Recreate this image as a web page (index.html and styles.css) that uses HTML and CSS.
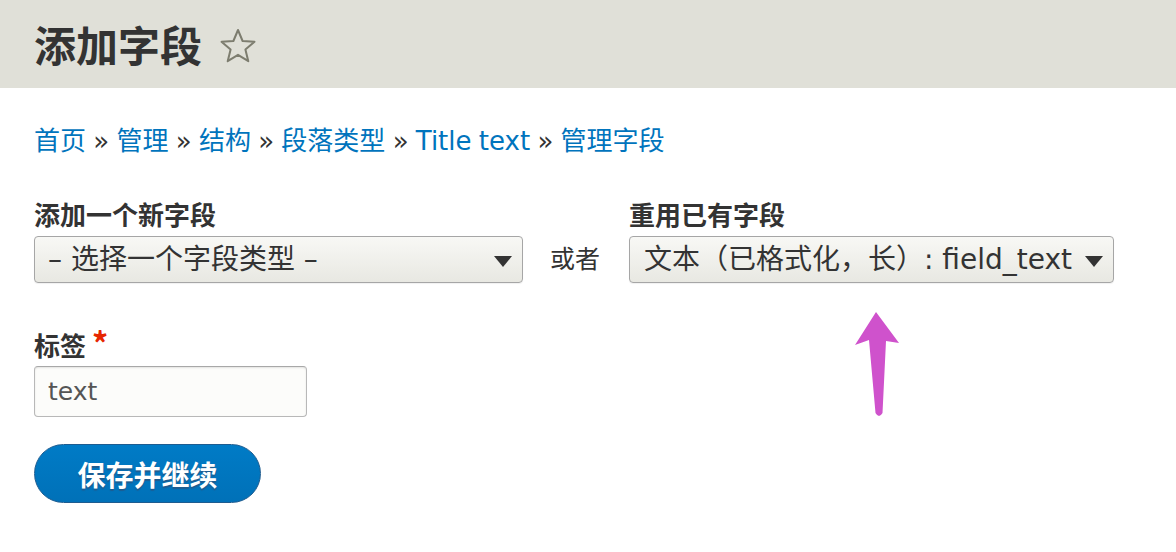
FILE: index.html
```html
<!DOCTYPE html>
<html lang="zh-CN">
<head>
  <meta charset="UTF-8" />
  <meta name="viewport" content="width=device-width, initial-scale=1.0"/>
  <title>添加字段</title>
  <link rel="stylesheet" href="styles.css">
</head>
<body>
  <header class="page-header">
    <h1>添加字段</h1>
    <svg class="star" width="38" height="38" viewBox="0 0 38 38">
      <polygon points="19,3 23.6,14 35.5,14.8 26.4,22.5 29.3,34.2 19,27.8 8.7,34.2 11.6,22.5 2.5,14.8 14.4,14" fill="none" stroke="#7d7d6f" stroke-width="2" stroke-linejoin="round"/>
    </svg>
  </header>

  <main class="content">
    <nav class="breadcrumb">
      <a href="#">首页</a> » <a href="#">管理</a> » <a href="#">结构</a> » <a href="#">段落类型</a> » <a href="#">Title text</a> » <a href="#">管理字段</a>
    </nav>

    <form>
      <div class="field-row">
        <div class="field field-new">
          <label for="new-type">添加一个新字段</label>
          <div class="select-wrap">
            <select id="new-type">
              <option>– 选择一个字段类型 –</option>
            </select>
          </div>
        </div>
        <div class="or">或者</div>
        <div class="field field-existing">
          <label for="existing">重用已有字段</label>
          <div class="select-wrap">
            <select id="existing">
              <option>文本（已格式化，长）: field_text</option>
            </select>
          </div>
        </div>
      </div>

      <div class="field field-label">
        <label for="label">标签 <span class="required">*</span></label>
        <input type="text" id="label" value="text" />
      </div>

      <button type="button" class="button-primary">保存并继续</button>
    </form>
  </main>

  <!-- annotation arrow drawn on top of the screenshot -->
  <svg class="annotation" width="60" height="120" viewBox="0 0 60 120">
    <path d="M26 7 L49 38 L36 36 L32.5 108 Q29 114 25.5 108 L19 35 L5 40 Z" fill="#cf52cc"/>
  </svg>
</body>
</html>
```

FILE: styles.css
```css
body {
  margin: 0;
  font-family: "DejaVu Sans", "Noto Sans CJK SC", sans-serif;
  color: #333;
  background: #fff;
  position: relative;
}

.page-header {
  background: #e0e0d8;
  height: 88px;
  padding: 0 34px;
  display: flex;
  align-items: center;
  gap: 17px;
}

.page-header h1 {
  margin: 0;
  font-family: "Noto Sans CJK SC", sans-serif;
  font-size: 42px;
  font-weight: bold;
  line-height: 1;
  color: #333;
}

.star {
  margin-top: 3px;
}

.content {
  padding: 35px 34px;
}

.breadcrumb {
  font-size: 26px;
  line-height: 36px;
  margin-bottom: 40px;
  word-spacing: -1px;
  color: #333;
}

.breadcrumb a {
  color: #0074bd;
  text-decoration: none;
}

.field-row {
  display: flex;
  align-items: flex-end;
}

.field label {
  display: block;
  font-family: "Noto Sans CJK SC", sans-serif;
  font-weight: bold;
  font-size: 26px;
  line-height: 30px;
  height: 30px;
  margin-bottom: 7px;
}

.select-wrap {
  position: relative;
}

.select-wrap::after {
  content: "";
  position: absolute;
  right: 11px;
  top: 20px;
  border-left: 9px solid transparent;
  border-right: 9px solid transparent;
  border-top: 11px solid #333;
  pointer-events: none;
}

select {
  appearance: none;
  -webkit-appearance: none;
  display: block;
  height: 47px;
  padding: 0 30px 0 13px;
  font-family: "DejaVu Sans", "Noto Sans CJK SC", sans-serif;
  font-size: 28px;
  color: #333;
  border: 1px solid #a6a6a6;
  border-radius: 4px;
  background: linear-gradient(#f8f8f5, #e8e8e2);
  box-shadow: 0 1px 1px rgba(0, 0, 0, 0.06);
}

.field-new select {
  width: 489px;
}

.field-existing select {
  width: 485px;
  padding-left: 14px;
}

.or {
  height: 47px;
  display: flex;
  align-items: center;
  margin: 0 29px 0 27px;
  font-family: "Noto Sans CJK SC", sans-serif;
  font-size: 25px;
  padding-bottom: 6px;
  box-sizing: border-box;
}

.field-label {
  margin-top: 47px;
}

.field-label label {
  margin-bottom: 6px;
}

.required {
  color: #e62600;
  font-size: 32px;
  line-height: 0;
}

input[type="text"] {
  display: block;
  box-sizing: border-box;
  width: 273px;
  height: 51px;
  padding: 0 13px;
  font-family: "DejaVu Sans", sans-serif;
  font-size: 25px;
  color: #555;
  background: #fcfcfa;
  border: 1px solid #b8b8b8;
  border-top-color: #a8a8a8;
  border-radius: 4px;
  box-shadow: inset 0 1px 2px rgba(0, 0, 0, 0.1);
}

.button-primary {
  margin-top: 27px;
  width: 227px;
  height: 59px;
  border-radius: 30px;
  border: 1px solid #1e5c90;
  background: linear-gradient(#007bc6, #0071b8);
  color: #fff;
  font-family: "Noto Sans CJK SC", sans-serif;
  font-size: 28px;
  font-weight: bold;
  text-shadow: 0 2px 1px #1e5c90;
  cursor: pointer;
}

.annotation {
  position: absolute;
  left: 850px;
  top: 305px;
}
```
